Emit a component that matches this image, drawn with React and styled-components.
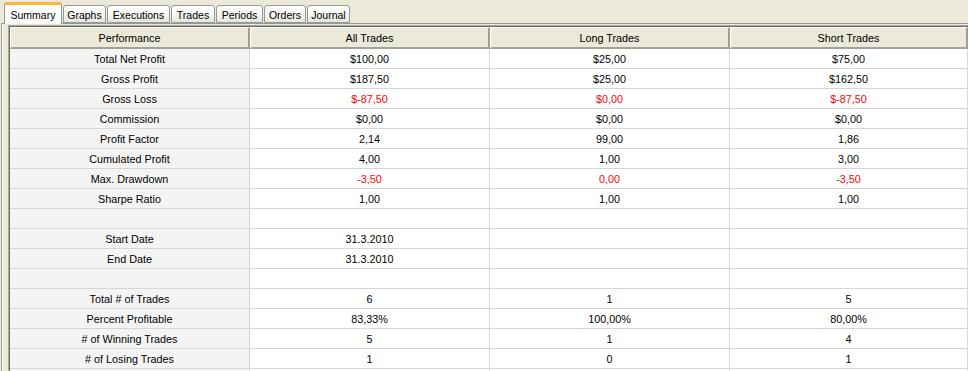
import React from "react";
import styled, { createGlobalStyle } from "styled-components";

const Global = createGlobalStyle`
  html, body { margin: 0; padding: 0; }
  body {
    background: #ECE9D8;
    width: 968px;
    height: 371px;
    overflow: hidden;
    font-family: "Liberation Sans", Arial, sans-serif;
    font-size: 10.8px;
    color: #000;
  }
`;

const Window = styled.div`
  display: flex;
  flex-direction: column;
  padding-left: 1px;
  height: 371px;
`;

const TabStrip = styled.div`
  display: flex;
  align-items: flex-end;
  height: 23px;
  padding-left: 3px;
  position: relative;
  z-index: 1;
`;

const Tab = styled.div`
  box-sizing: border-box;
  display: flex;
  align-items: center;
  justify-content: center;
  width: ${(p) => p.$w}px;
  height: ${(p) => (p.$active ? 22 : 18)}px;
  margin-bottom: ${(p) => (p.$active ? -1 : 0)}px;
  margin-right: 1px;
  border: 1px solid #919B9C;
  border-bottom: ${(p) => (p.$active ? "none" : "1px solid #919B9C")};
  border-top: ${(p) => (p.$active ? "3px solid #F9B53A" : "1px solid #919B9C")};
  border-radius: 3px 3px 0 0;
  background: ${(p) =>
    p.$active ? "#FCFCFE" : "linear-gradient(#FFFFFF, #F3F3EF 60%, #E6E5DE)"};
  padding-top: ${(p) => (p.$active ? 0 : 1)}px;
  white-space: nowrap;
  font-size: 10.5px;
`;

const Panel = styled.div`
  flex: 1;
  border-left: 1px solid #919B9C;
  border-top: 1px solid #919B9C;
  box-shadow: inset 1px 0 0 #FFFFFF;
  padding: 1px 0 0 6px;
  min-height: 0;
  overflow: hidden;
`;

const Grid = styled.div`
  border-left: 1px solid #ACA899;
  border-top: 1px solid #ACA899;
  box-shadow: inset 1px 1px 0 #716F64;
  padding: 1px 0 0 1px;
  background: #FFFFFF;
  height: 100%;
`;

const Row = styled.div`
  display: grid;
  grid-template-columns: 240px 240px 240px 238px;
`;

const HeadCell = styled.div`
  box-sizing: border-box;
  height: 22px;
  display: flex;
  align-items: center;
  justify-content: center;
  background: #EBE9D9;
  border-top: 1px solid #FFFFFF;
  border-left: 1px solid #FFFFFF;
  border-right: 2px solid #A09E94;
  border-bottom: 2px solid #A4A295;
  padding-top: 1px;
`;

const Cell = styled.div`
  box-sizing: border-box;
  height: 20px;
  display: flex;
  align-items: center;
  justify-content: center;
  background: ${(p) => (p.$label ? "#F4F4F4" : "#FFFFFF")};
  color: ${(p) => (p.$neg ? "#FF0000" : "#000000")};
  border-right: 1px solid #D6D6D6;
  border-bottom: 1px solid #D6D6D6;
`;

const tabs = [
  ["Summary", 58],
  ["Graphs", 43],
  ["Executions", 63],
  ["Trades", 44],
  ["Periods", 47],
  ["Orders", 42],
  ["Journal", 43],
];

const rows = [
  ["Total Net Profit", "$100,00", "$25,00", "$75,00"],
  ["Gross Profit", "$187,50", "$25,00", "$162,50"],
  ["Gross Loss", "$-87,50", "$0,00", "$-87,50", true],
  ["Commission", "$0,00", "$0,00", "$0,00"],
  ["Profit Factor", "2,14", "99,00", "1,86"],
  ["Cumulated Profit", "4,00", "1,00", "3,00"],
  ["Max. Drawdown", "-3,50", "0,00", "-3,50", true],
  ["Sharpe Ratio", "1,00", "1,00", "1,00"],
  ["", "", "", ""],
  ["Start Date", "31.3.2010", "", ""],
  ["End Date", "31.3.2010", "", ""],
  ["", "", "", ""],
  ["Total # of Trades", "6", "1", "5"],
  ["Percent Profitable", "83,33%", "100,00%", "80,00%"],
  ["# of Winning Trades", "5", "1", "4"],
  ["# of Losing Trades", "1", "0", "1"],
  ["", "", "", ""],
];

export default function App() {
  return (
    <>
      <Global />
      <Window>
        <TabStrip>
          {tabs.map(([t, w], i) => (
            <Tab key={t} $w={w} $active={i === 0}>
              {t}
            </Tab>
          ))}
        </TabStrip>
        <Panel>
          <Grid>
            <Row>
              {["Performance", "All Trades", "Long Trades", "Short Trades"].map((h) => (
                <HeadCell key={h}>{h}</HeadCell>
              ))}
            </Row>
            {rows.map((r, i) => (
              <Row key={i}>
                <Cell $label>{r[0]}</Cell>
                <Cell $neg={r[4]}>{r[1]}</Cell>
                <Cell $neg={r[4]}>{r[2]}</Cell>
                <Cell $neg={r[4]}>{r[3]}</Cell>
              </Row>
            ))}
          </Grid>
        </Panel>
      </Window>
    </>
  );
}
